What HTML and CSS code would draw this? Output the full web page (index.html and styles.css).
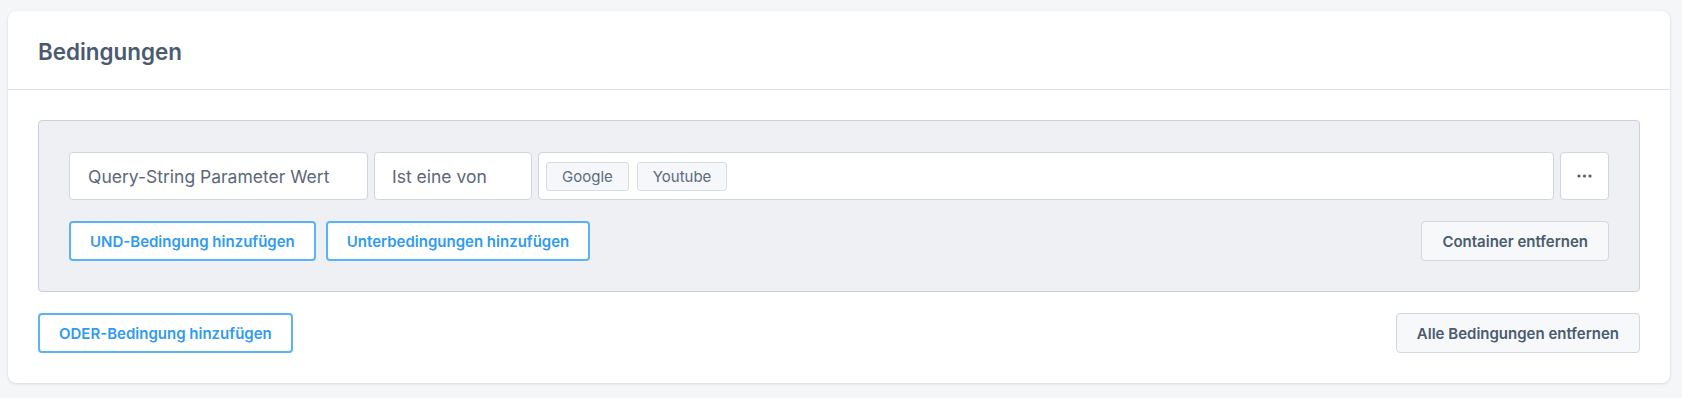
FILE: index.html
```html
<!DOCTYPE html>
<html lang="de">
<head>
<meta charset="utf-8">
<title>Bedingungen</title>
<link rel="stylesheet" href="styles.css">
</head>
<body>
<div class="page">
  <section class="card">
    <header class="card-header">
      <h2 class="card-title">Bedingungen</h2>
    </header>
    <div class="card-body">
      <div class="group">
        <div class="cond-row">
          <div class="field field-param">Query-String Parameter Wert</div>
          <div class="field field-op">Ist eine von</div>
          <div class="field field-values">
            <span class="tag">Google</span>
            <span class="tag">Youtube</span>
          </div>
          <button class="field field-more" type="button" aria-label="Mehr">
            <svg width="15" height="4" viewBox="0 0 15 4"><circle cx="2" cy="2" r="1.6"/><circle cx="7.5" cy="2" r="1.6"/><circle cx="13" cy="2" r="1.6"/></svg>
          </button>
        </div>
        <div class="btn-row">
          <div class="btn-group">
            <button class="btn btn-outline" type="button">UND-Bedingung hinzufügen</button>
            <button class="btn btn-outline" type="button">Unterbedingungen hinzufügen</button>
          </div>
          <button class="btn btn-light" type="button">Container entfernen</button>
        </div>
      </div>
      <div class="btn-row footer-row">
        <button class="btn btn-outline" type="button">ODER-Bedingung hinzufügen</button>
        <button class="btn btn-light" type="button">Alle Bedingungen entfernen</button>
      </div>
    </div>
  </section>
</div>
</body>
</html>
```

FILE: styles.css
```css
* { box-sizing: border-box; }
html, body {
  margin: 0;
  background: #f5f6f8;
  font-family: Inter, "Noto Sans", "Liberation Sans", sans-serif;
}
.page {
  padding: 11px 12px 14px 8px;
}
.card {
  background: #ffffff;
  border-radius: 8px;
  box-shadow: 0 1px 3px rgba(30, 45, 70, 0.12), 0 0 1px rgba(30, 45, 70, 0.08);
}
.card-header {
  padding: 28px 30px 24px;
  border-bottom: 1px solid #dfe3e9;
}
.card-title {
  margin: 0;
  font-size: 22.4px;
  line-height: 26px;
  font-weight: 600;
  color: #4a5b70;
}
.card-body {
  padding: 30px 30px 30px;
}
.group {
  background: #eef0f4;
  border: 1px solid #c9d1dc;
  border-radius: 4px;
  padding: 31px 30px 30px;
}
.cond-row {
  display: flex;
  gap: 6px;
  height: 48px;
}
.field {
  background: #ffffff;
  border: 1px solid #cfd6df;
  border-radius: 4px;
  display: flex;
  align-items: center;
  font-size: 17.5px;
  color: #5b6878;
  font-family: inherit;
}
.field-param {
  width: 299px;
  padding-left: 18px;
}
.field-op {
  width: 158px;
  padding-left: 17px;
}
.field-values {
  flex: 1;
  padding-left: 7px;
  gap: 8px;
}
.tag {
  display: inline-flex;
  align-items: center;
  height: 29px;
  padding: 0 15px;
  background: #f5f7fa;
  border: 1px solid #d6dce4;
  border-radius: 3px;
  font-size: 15px;
  color: #5c6b7d;
}
.field-more {
  width: 49px;
  justify-content: center;
  padding: 0;
  cursor: pointer;
}
.field-more svg { fill: #4f5e70; }
.btn-row {
  display: flex;
  justify-content: space-between;
  align-items: center;
  margin-top: 21px;
}
.footer-row {
  margin-top: 21px;
}
.btn-group {
  display: flex;
  gap: 10px;
}
.btn {
  height: 40px;
  padding: 0 20px;
  border-radius: 4px;
  font-family: inherit;
  font-size: 15px;
  font-weight: 600;
  cursor: pointer;
}
.btn-outline {
  background: #ffffff;
  border: 2px solid #5ab3f6;
  color: #2f9bf0;
  padding: 0 19px;
}
.btn-light {
  background: #f6f8fa;
  border: 1px solid #cfd7e0;
  color: #4a5b70;
}
```
